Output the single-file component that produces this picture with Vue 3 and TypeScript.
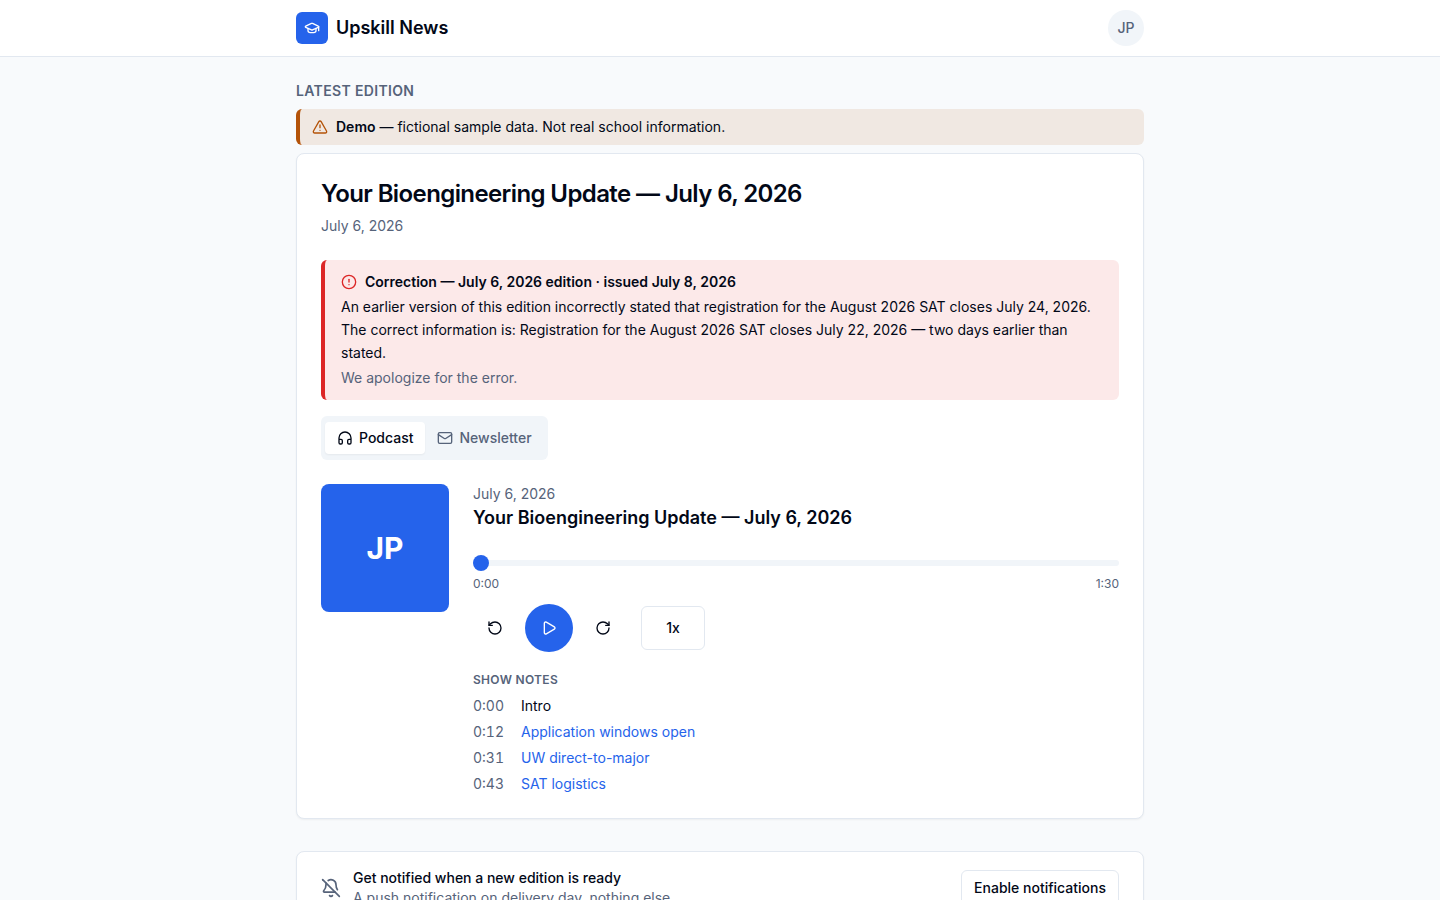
<script setup lang="ts">
import { ref } from 'vue'

interface Note {
  at: number
  label: string
  link: boolean
}

const title = 'Your Bioengineering Update — July 6, 2026'
const duration = 90
const position = ref(0)
const playing = ref(false)
const activeTab = ref<'podcast' | 'newsletter'>('podcast')
const rates = [1, 1.25, 1.5, 2]
const rateIndex = ref(0)

const notes: Note[] = [
  { at: 0, label: 'Intro', link: false },
  { at: 12, label: 'Application windows open', link: true },
  { at: 31, label: 'UW direct-to-major', link: true },
  { at: 43, label: 'SAT logistics', link: true },
]

function clock(seconds: number): string {
  return `${Math.floor(seconds / 60)}:${String(seconds % 60).padStart(2, '0')}`
}

function seek(to: number): void {
  position.value = Math.min(duration, Math.max(0, to))
}
</script>

<template>
  <div class="page">
    <header class="topbar">
      <div class="container topbar-row">
        <a class="brand" href="#">
          <span class="logo">
            <svg class="icon" viewBox="0 0 24 24" aria-hidden="true">
              <path d="M21.42 10.922a1 1 0 0 0-.019-1.838L12.83 5.18a2 2 0 0 0-1.66 0L2.6 9.08a1 1 0 0 0 0 1.832l8.57 3.908a2 2 0 0 0 1.66 0z" />
              <path d="M22 10v6" />
              <path d="M6 12.5V16a6 3 0 0 0 12 0v-3.5" />
            </svg>
          </span>
          <span>Upskill News</span>
        </a>
        <button class="avatar" type="button">JP</button>
      </div>
    </header>

    <main class="container main">
      <section class="edition">
        <h2 class="eyebrow">Latest edition</h2>

        <div class="demo" role="note">
          <svg class="icon" viewBox="0 0 24 24" aria-hidden="true">
            <path d="m21.73 18-8-14a2 2 0 0 0-3.48 0l-8 14A2 2 0 0 0 4 21h16a2 2 0 0 0 1.73-3" />
            <path d="M12 9v4" />
            <path d="M12 17h.01" />
          </svg>
          <p><strong>Demo</strong> — fictional sample data. Not real school information.</p>
        </div>

        <article class="card edition-card">
          <div class="heading">
            <h1>{{ title }}</h1>
            <p class="muted">July 6, 2026</p>
          </div>

          <div class="correction" role="note">
            <div class="correction-title">
              <svg class="icon" viewBox="0 0 24 24" aria-hidden="true">
                <circle cx="12" cy="12" r="10" />
                <path d="M12 8v4" />
                <path d="M12 16h.01" />
              </svg>
              <h3>Correction — July 6, 2026 edition · issued July 8, 2026</h3>
            </div>
            <p class="correction-text">
              An earlier version of this edition incorrectly stated that registration for the August 2026 SAT closes
              July 24, 2026. The correct information is: Registration for the August 2026 SAT closes July 22, 2026 — two
              days earlier than stated.
            </p>
            <p class="muted">We apologize for the error.</p>
          </div>

          <div class="tabs" role="tablist">
            <button
              type="button"
              role="tab"
              class="tab"
              :class="{ active: activeTab === 'podcast' }"
              :aria-selected="activeTab === 'podcast'"
              @click="activeTab = 'podcast'"
            >
              <svg class="icon" viewBox="0 0 24 24" aria-hidden="true">
                <path d="M3 14h3a2 2 0 0 1 2 2v3a2 2 0 0 1-2 2H5a2 2 0 0 1-2-2v-7a9 9 0 0 1 18 0v7a2 2 0 0 1-2 2h-1a2 2 0 0 1-2-2v-3a2 2 0 0 1 2-2h3" />
              </svg>
              Podcast
            </button>
            <button
              type="button"
              role="tab"
              class="tab"
              :class="{ active: activeTab === 'newsletter' }"
              :aria-selected="activeTab === 'newsletter'"
              @click="activeTab = 'newsletter'"
            >
              <svg class="icon" viewBox="0 0 24 24" aria-hidden="true">
                <rect x="2" y="4" width="20" height="16" rx="2" />
                <path d="m22 7-8.97 5.7a1.94 1.94 0 0 1-2.06 0L2 7" />
              </svg>
              Newsletter
            </button>
          </div>

          <div class="player">
            <div class="cover">JP</div>
            <div class="player-body">
              <p class="muted">July 6, 2026</p>
              <h3 class="track-title">{{ title }}</h3>

              <input
                v-model.number="position"
                class="seek"
                type="range"
                min="0"
                :max="duration"
                aria-label="Playback position"
              />
              <div class="times">
                <span>{{ clock(position) }}</span>
                <span>{{ clock(duration) }}</span>
              </div>

              <div class="controls">
                <button class="skip" type="button" aria-label="Back 15 seconds" @click="seek(position - 15)">
                  <svg class="icon" viewBox="0 0 24 24" aria-hidden="true">
                    <path d="M3 12a9 9 0 1 0 9-9 9.75 9.75 0 0 0-6.74 2.74L3 8" />
                    <path d="M3 3v5h5" />
                  </svg>
                </button>
                <button class="play" type="button" aria-label="Play" @click="playing = !playing">
                  <svg class="icon" viewBox="0 0 24 24" aria-hidden="true">
                    <path v-if="playing" d="M7 4v16M17 4v16" />
                    <path v-else d="M5 5a2 2 0 0 1 3.008-1.728l11.997 6.998a2 2 0 0 1 .003 3.458l-12 7A2 2 0 0 1 5 19z" />
                  </svg>
                </button>
                <button class="skip" type="button" aria-label="Forward 15 seconds" @click="seek(position + 15)">
                  <svg class="icon" viewBox="0 0 24 24" aria-hidden="true">
                    <path d="M21 12a9 9 0 1 1-9-9c2.52 0 4.93 1 6.74 2.74L21 8" />
                    <path d="M21 3v5h-5" />
                  </svg>
                </button>
                <button class="outline rate" type="button" @click="rateIndex = (rateIndex + 1) % rates.length">
                  {{ rates[rateIndex] }}x
                </button>
              </div>

              <h4 class="notes-title">Show notes</h4>
              <ul class="notes">
                <li v-for="note in notes" :key="note.at">
                  <span class="stamp">{{ clock(note.at) }}</span>
                  <a v-if="note.link" href="#">{{ note.label }}</a>
                  <span v-else>{{ note.label }}</span>
                </li>
              </ul>
            </div>
          </div>
        </article>
      </section>

      <section class="card notify">
        <svg class="icon bell" viewBox="0 0 24 24" aria-hidden="true">
          <path d="M10.268 21a2 2 0 0 0 3.464 0" />
          <path d="M17 17H4a1 1 0 0 1-.74-1.673C4.59 13.956 6 12.499 6 8a6 6 0 0 1 .258-1.742" />
          <path d="m2 2 20 20" />
          <path d="M8.668 3.01A6 6 0 0 1 18 8c0 2.687.77 4.653 1.707 6.05" />
        </svg>
        <div class="notify-text">
          <h3>Get notified when a new edition is ready</h3>
          <p class="muted">A push notification on delivery day, nothing else.</p>
        </div>
        <button class="outline enable" type="button">Enable notifications</button>
      </section>
    </main>
  </div>
</template>

<style>
body {
  background: #f8fafc;
}
</style>

<style scoped>
.page {
  --muted: #56637a;
  min-height: 100vh;
  background: #f8fafc;
  color: #020817;
  font-family: Inter, 'Liberation Sans', sans-serif;
  font-size: 14px;
  line-height: 20px;
}

.page *,
.page *::before {
  box-sizing: border-box;
}

h1,
h2,
h3,
h4,
p,
ul {
  margin: 0;
  padding: 0;
}

button {
  border: 0;
  padding: 0;
  background: none;
  color: inherit;
  font: inherit;
  font-weight: 500;
  cursor: pointer;
}

a {
  color: #2563eb;
  text-decoration: none;
}

.icon {
  flex: none;
  width: 16px;
  height: 16px;
  fill: none;
  stroke: currentColor;
  stroke-width: 2;
  stroke-linecap: round;
  stroke-linejoin: round;
}

.muted {
  color: var(--muted);
}

.container {
  max-width: 896px;
  margin: 0 auto;
  padding: 0 24px;
}

.topbar {
  background: #fff;
  border-bottom: 1px solid #e2e8f0;
}

.topbar-row {
  display: flex;
  align-items: center;
  justify-content: space-between;
  height: 56px;
}

.brand {
  display: flex;
  align-items: center;
  gap: 8px;
  color: #020817;
  font-size: 18px;
  font-weight: 600;
  line-height: 28px;
}

.logo {
  display: grid;
  place-items: center;
  width: 32px;
  height: 32px;
  border-radius: 6px;
  background: #2563eb;
  color: #fff;
}

.avatar {
  width: 36px;
  height: 36px;
  border-radius: 50%;
  background: #f1f5f9;
  color: var(--muted);
}

.main {
  display: flex;
  flex-direction: column;
  gap: 32px;
  padding-top: 24px;
  padding-bottom: 24px;
}

.edition {
  display: flex;
  flex-direction: column;
  gap: 8px;
}

.eyebrow {
  color: var(--muted);
  font-size: 14px;
  font-weight: 600;
  letter-spacing: 0.025em;
  text-transform: uppercase;
}

.demo {
  display: flex;
  align-items: center;
  gap: 8px;
  padding: 8px 12px;
  border-left: 4px solid #b45309;
  border-radius: 6px;
  background: #f0e8e2;
}

.demo .icon {
  color: #b45309;
}

.demo strong {
  font-weight: 600;
}

.card {
  border: 1px solid #e2e8f0;
  border-radius: 8px;
  background: #fff;
  box-shadow: 0 1px 2px rgba(0, 0, 0, 0.05);
}

.edition-card {
  padding: 24px;
}

.heading {
  display: flex;
  flex-direction: column;
  gap: 6px;
}

h1 {
  font-size: 24px;
  font-weight: 600;
  letter-spacing: -0.025em;
  line-height: 32px;
}

.correction {
  margin-top: 24px;
  padding: 12px 16px;
  border-left: 4px solid #dc2626;
  border-radius: 6px;
  background: #fce9e9;
}

.correction-title {
  display: flex;
  align-items: center;
  gap: 8px;
}

.correction-title .icon {
  color: #dc2626;
}

.correction-title h3 {
  font-size: 14px;
  font-weight: 600;
}

.correction-text {
  margin: 3px 0 4px;
  line-height: 23px;
}

.tabs {
  display: inline-flex;
  align-items: center;
  height: 44px;
  margin: 16px 0 24px;
  padding: 4px;
  border-radius: 6px;
  background: #f1f5f9;
  vertical-align: top;
}

.tab {
  display: flex;
  align-items: center;
  gap: 6px;
  padding: 6px 12px;
  border-radius: 4px;
  color: var(--muted);
}

.tab.active {
  background: #fff;
  color: #020817;
  box-shadow: 0 1px 2px rgba(0, 0, 0, 0.05);
}

.player {
  display: flex;
  align-items: flex-start;
  gap: 24px;
}

.cover {
  display: grid;
  flex: none;
  place-items: center;
  width: 128px;
  height: 128px;
  border-radius: 8px;
  background: #2563eb;
  color: #fff;
  font-size: 30px;
  font-weight: 700;
  line-height: 36px;
}

.player-body {
  flex: 1;
  min-width: 0;
}

.track-title {
  font-size: 18px;
  font-weight: 600;
  line-height: 28px;
}

.seek {
  display: block;
  width: 100%;
  height: 16px;
  margin: 23px 0 5px;
  appearance: none;
  background: transparent;
  cursor: pointer;
}

.seek::-webkit-slider-runnable-track {
  height: 6px;
  border-radius: 3px;
  background: #f1f5f9;
}

.seek::-webkit-slider-thumb {
  width: 16px;
  height: 16px;
  margin-top: -5px;
  appearance: none;
  border-radius: 50%;
  background: #2563eb;
}

.times {
  display: flex;
  justify-content: space-between;
  color: var(--muted);
  font-size: 12px;
  line-height: 16px;
}

.controls {
  display: flex;
  align-items: center;
  gap: 8px;
  margin-top: 12px;
}

.skip,
.play {
  display: grid;
  place-items: center;
  width: 44px;
  height: 44px;
  border-radius: 6px;
}

.play {
  width: 48px;
  height: 48px;
  border-radius: 50%;
  background: #2563eb;
  color: #fff;
}

.outline {
  border: 1px solid #e2e8f0;
  border-radius: 6px;
  background: #fff;
}

.rate {
  width: 64px;
  height: 44px;
  margin-left: 8px;
}

.notes-title {
  margin: 20px 0 8px;
  color: var(--muted);
  font-size: 12px;
  font-weight: 600;
  letter-spacing: 0.025em;
  line-height: 16px;
  text-transform: uppercase;
}

.notes {
  display: flex;
  flex-direction: column;
  gap: 6px;
  list-style: none;
}

.notes li {
  display: flex;
  gap: 8px;
}

.stamp {
  width: 40px;
  color: var(--muted);
  font-variant-numeric: tabular-nums;
}

.notify {
  display: flex;
  align-items: center;
  gap: 12px;
  padding: 16px 24px;
}

.bell {
  width: 20px;
  height: 20px;
  color: var(--muted);
}

.notify-text {
  flex: 1;
}

.notify-text h3 {
  font-size: 14px;
  font-weight: 500;
}

.enable {
  height: 36px;
  padding: 0 12px;
}
</style>
